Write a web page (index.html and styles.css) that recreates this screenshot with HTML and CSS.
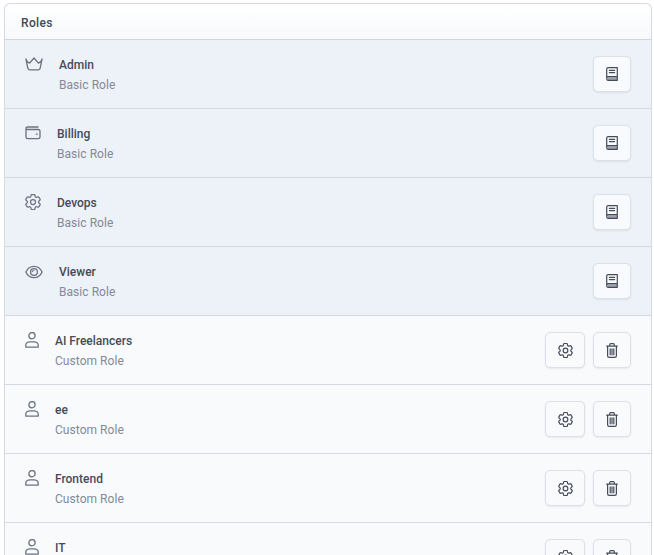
FILE: index.html
```html
<!DOCTYPE html>
<html lang="en">
<head>
<meta charset="utf-8">
<title>Roles</title>
<link rel="stylesheet" href="styles.css">
</head>
<body>
<svg class="defs" width="0" height="0" aria-hidden="true">
  <symbol id="book" viewBox="0 0 12 14"><path d="M.7 11.600V2C.7 1.300 1.300.7 2 .7h9.300v9H2.300c-.9 0-1.600.7-1.600 1.700s.7 1.900 1.600 1.900h9v-2.700M3.400 3.400h5.200M3.400 5.600h5.200" fill="none" stroke="currentColor" stroke-width="1.200" stroke-linecap="round" stroke-linejoin="round"/><path d="M1.500 10.200h9.800v3H2z" fill="currentColor" opacity=".5"/></symbol>
  <symbol id="gear" viewBox="2.400 2.400 19.200 19.200"><path d="M9.594 3.940c.09-.542.56-.94 1.110-.94h2.593c.55 0 1.020.398 1.110.94l.213 1.281c.063.374.313.686.645.870.074.040.147.083.22.127.325.196.72.257 1.075.124l1.217-.456a1.125 1.125 0 0 1 1.370.49l1.296 2.247a1.125 1.125 0 0 1-.26 1.431l-1.003.827c-.293.241-.438.613-.43.992a7.723 7.723 0 0 1 0 .255c-.008.378.137.75.43.991l1.004.827c.424.35.534.955.26 1.430l-1.298 2.247a1.125 1.125 0 0 1-1.369.491l-1.217-.456c-.355-.133-.75-.072-1.076.124a6.470 6.470 0 0 1-.22.128c-.331.183-.581.495-.644.869l-.213 1.281c-.09.543-.56.94-1.110.94h-2.594c-.55 0-1.019-.398-1.110-.94l-.213-1.281c-.062-.374-.312-.686-.644-.87a6.520 6.520 0 0 1-.22-.127c-.325-.196-.72-.257-1.076-.124l-1.217.456a1.125 1.125 0 0 1-1.369-.49l-1.297-2.247a1.125 1.125 0 0 1 .26-1.431l1.004-.827c.292-.24.437-.613.43-.991a6.932 6.932 0 0 1 0-.255c.007-.38-.138-.751-.43-.992l-1.004-.827a1.125 1.125 0 0 1-.26-1.430l1.297-2.247a1.125 1.125 0 0 1 1.370-.491l1.216.456c.356.133.751.072 1.076-.124.072-.044.146-.086.22-.128.332-.183.582-.495.644-.869l.214-1.280Z" fill="none" stroke="currentColor" stroke-width="1.500" stroke-linejoin="round"/><circle cx="12" cy="12" r="3" fill="none" stroke="currentColor" stroke-width="1.500"/></symbol>
  <symbol id="trash" viewBox="0 0 12 15"><path d="M.6 3.100h10.800M3.700 3V1.800c0-.6.400-1.100 1-1.100h2.600c.6 0 1 .5 1 1.100V3M1.600 3.300v9.400c0 .9.7 1.600 1.600 1.600h5.600c.9 0 1.600-.7 1.600-1.600V3.300M4.200 5.800v6M6 5.800v6M7.800 5.800v6" fill="none" stroke="currentColor" stroke-width="1.200" stroke-linecap="round" stroke-linejoin="round"/></symbol>
  <symbol id="user" viewBox="0 0 14 16"><circle cx="7" cy="3.700" r="3.100" fill="none" stroke="currentColor" stroke-width="1.300"/><path d="M.8 15.200v-1.900c0-2.100 1.900-3.500 4-3.500h4.400c2.100 0 4 1.400 4 3.500v1.900z" fill="none" stroke="currentColor" stroke-width="1.300" stroke-linejoin="round"/></symbol>
</svg>
<section class="card">
  <header class="card-head">Roles</header>

  <div class="row basic">
    <svg class="ico w18" viewBox="0 0 18 14"><path d="M.9 1.900c.4 2 1.800 3.600 3.700 4.300L9 1l4.400 5.200c1.900-.7 3.300-2.300 3.700-4.300l-1.900 9.300c-.2 1-.8 1.600-1.800 1.600H4.600c-1 0-1.600-.6-1.800-1.600z" fill="none" stroke="currentColor" stroke-width="1.300" stroke-linejoin="round"/></svg>
    <div class="info"><div class="name">Admin</div><div class="kind">Basic Role</div></div>
    <div class="actions"><button class="btn raised"><svg class="bi book"><use href="#book"/></svg></button></div>
  </div>

  <div class="row basic">
    <svg class="ico w16" viewBox="0 0 16 14"><path d="M1 3.200V11c0 1 .7 1.700 1.700 1.700h10.600c1 0 1.700-.7 1.700-1.700V5.200c0-1-.7-1.700-1.700-1.700H2.600C1.600 3.500 1 2.800 1 2.300 1 1.500 1.700 1 2.600 1h10.400" fill="none" stroke="currentColor" stroke-width="1.300" stroke-linecap="round"/><path d="M11.200 8.100h1.100" stroke="currentColor" stroke-width="1.300" stroke-linecap="round"/></svg>
    <div class="info"><div class="name">Billing</div><div class="kind">Basic Role</div></div>
    <div class="actions"><button class="btn raised"><svg class="bi book"><use href="#book"/></svg></button></div>
  </div>

  <div class="row basic">
    <svg class="ico w16 tall"><use href="#gear"/></svg>
    <div class="info"><div class="name">Devops</div><div class="kind">Basic Role</div></div>
    <div class="actions"><button class="btn raised"><svg class="bi book"><use href="#book"/></svg></button></div>
  </div>

  <div class="row basic">
    <svg class="ico w18 eye" viewBox="0 0 18 14"><path d="M.9 7C2.500 3.400 5.400 1.300 9 1.300S15.500 3.400 17.100 7c-1.600 3.600-4.500 5.700-8.100 5.700S2.500 10.600.9 7z" fill="none" stroke="currentColor" stroke-width="1.300" stroke-linejoin="round"/><circle cx="9" cy="7" r="3.400" fill="none" stroke="currentColor" stroke-width="1.300"/><path d="M7.400 6.600c.2-.8.800-1.300 1.600-1.300" fill="none" stroke="currentColor" stroke-width="1.100" stroke-linecap="round"/></svg>
    <div class="info"><div class="name">Viewer</div><div class="kind">Basic Role</div></div>
    <div class="actions"><button class="btn raised"><svg class="bi book"><use href="#book"/></svg></button></div>
  </div>

  <div class="row">
    <svg class="ico w14 tall"><use href="#user"/></svg>
    <div class="info"><div class="name">AI Freelancers</div><div class="kind">Custom Role</div></div>
    <div class="actions"><button class="btn wide"><svg class="bi gear"><use href="#gear"/></svg></button><button class="btn"><svg class="bi"><use href="#trash"/></svg></button></div>
  </div>

  <div class="row">
    <svg class="ico w14 tall"><use href="#user"/></svg>
    <div class="info"><div class="name">ee</div><div class="kind">Custom Role</div></div>
    <div class="actions"><button class="btn wide"><svg class="bi gear"><use href="#gear"/></svg></button><button class="btn"><svg class="bi"><use href="#trash"/></svg></button></div>
  </div>

  <div class="row">
    <svg class="ico w14 tall"><use href="#user"/></svg>
    <div class="info"><div class="name">Frontend</div><div class="kind">Custom Role</div></div>
    <div class="actions"><button class="btn wide"><svg class="bi gear"><use href="#gear"/></svg></button><button class="btn"><svg class="bi"><use href="#trash"/></svg></button></div>
  </div>

  <div class="row">
    <svg class="ico w14 tall"><use href="#user"/></svg>
    <div class="info"><div class="name">IT</div><div class="kind">Custom Role</div></div>
    <div class="actions"><button class="btn wide"><svg class="bi gear"><use href="#gear"/></svg></button><button class="btn"><svg class="bi"><use href="#trash"/></svg></button></div>
  </div>
</section>
</body>
</html>
```
FILE: styles.css
```css
html, body { height: 100%; overflow: hidden; }
body {
  margin: 0;
  padding: 3px 2px 0 4px;
  box-sizing: border-box;
  background: #fff;
  font-family: Roboto, "Liberation Sans", sans-serif;
  color: #374151;
}
.defs { position: absolute; }
.card {
  border: 1px solid #d5dae2;
  border-bottom: 0;
  border-radius: 6px 6px 0 0;
  background: #f9fafc;
}
.card-head {
  height: 36px;
  box-sizing: border-box;
  padding: 2px 16px 0;
  display: flex;
  align-items: center;
  font-size: 12px;
  letter-spacing: .35px;
  font-weight: 500;
  color: #414a58;
  background: linear-gradient(#ffffff, #f7f9fc);
  border-radius: 6px 6px 0 0;
  border-bottom: 1px solid #cfd6e1;
}
.row {
  height: 69px;
  box-sizing: border-box;
  display: flex;
  align-items: flex-start;
  padding: 16px 20px 0 20px;
  border-bottom: 1px solid #d3d9e3;
  background: #f9fafc;
}
.row.basic { background: #edf1f8; }
.ico { flex: none; color: #6b7280; margin-top: 1px; height: 14px; margin-right: 16px; }
.ico.tall { height: 16px; margin-top: 0; }
.ico.eye { margin-top: 2px; }
.w18 { width: 18px; }
.w16 { width: 16px; }
.w14 { width: 14px; }
.info { flex: 1; }
.name { font-size: 12px; line-height: 18px; font-weight: 500; color: #444c5a; }
.kind { font-size: 12px; line-height: 18px; margin-top: 2px; color: #828a98; letter-spacing: .05px; }
.actions { display: flex; gap: 8px; flex: none; }
.btn {
  width: 38px;
  height: 36px;
  padding: 0;
  display: flex;
  align-items: center;
  justify-content: center;
  border: 1px solid #dce0e7;
  border-radius: 5px;
  background: #f9fafc;
  color: #444c5a;
  box-shadow: 0 1px 2px rgba(30, 40, 60, .08);
}
.btn.wide { width: 40px; }
.btn.raised { background: #f9fafd; }
.bi { width: 12px; height: 15px; }
.bi.gear { width: 15px; }
.bi.book { height: 14px; }
```
